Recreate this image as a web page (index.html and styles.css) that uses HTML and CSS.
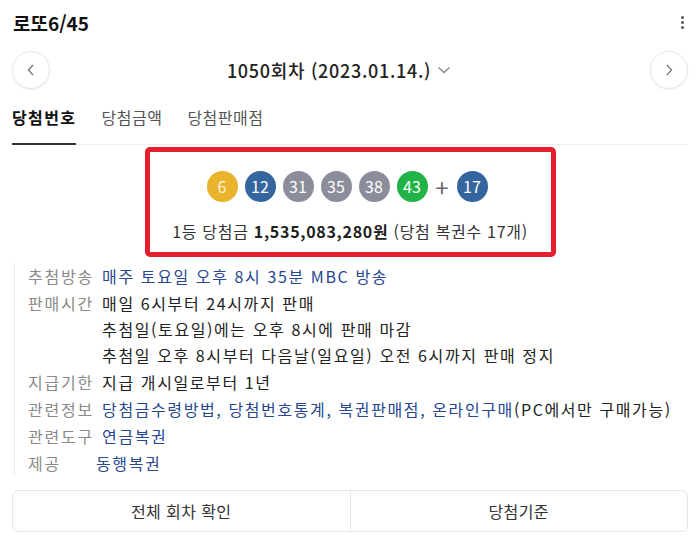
FILE: index.html
```html
<!DOCTYPE html>
<html lang="ko">
<head>
  <meta charset="UTF-8" />
  <meta name="viewport" content="width=device-width, initial-scale=1" />
  <title>로또6/45</title>
  <link rel="stylesheet" href="styles.css">
</head>
<body>
  <div class="top">
    <div class="top-title">로또6/45</div>
    <div class="kebab"><span></span><span></span><span></span></div>
  </div>

  <div class="nav">
    <button class="round-btn">
      <svg width="10" height="14" viewBox="0 0 10 14"><path d="M7 2 L2.5 7 L7 12" fill="none" stroke="#777" stroke-width="1.3"/></svg>
    </button>
    <div class="round-title">1050회차 (2023.01.14.)
      <svg class="caret" width="14" height="10" viewBox="0 0 14 10"><path d="M1.5 2.5 L7 7.5 L12.5 2.5" fill="none" stroke="#888" stroke-width="1.3"/></svg>
    </div>
    <button class="round-btn">
      <svg width="10" height="14" viewBox="0 0 10 14"><path d="M3 2 L7.5 7 L3 12" fill="none" stroke="#777" stroke-width="1.3"/></svg>
    </button>
  </div>

  <div class="tabs">
    <div class="tab active">당첨번호</div>
    <div class="tab">당첨금액</div>
    <div class="tab">당첨판매점</div>
  </div>

  <div class="win-box">
    <div class="balls">
      <span class="ball yellow">6</span>
      <span class="ball blue">12</span>
      <span class="ball gray">31</span>
      <span class="ball gray">35</span>
      <span class="ball gray">38</span>
      <span class="ball green">43</span>
      <span class="plus">+</span>
      <span class="ball blue">17</span>
    </div>
    <div class="prize">1등 당첨금 <strong>1,535,083,280원</strong> (당첨 복권수 17개)</div>
  </div>

  <div class="info">
    <div class="row">
      <span class="label">추첨방송</span>
      <div class="value link">매주 토요일 오후 8시 35분 MBC 방송</div>
    </div>
    <div class="row">
      <span class="label">판매시간</span>
      <div class="value">
        매일 6시부터 24시까지 판매<br>
        추첨일(토요일)에는 오후 8시에 판매 마감<br>
        추첨일 오후 8시부터 다음날(일요일) 오전 6시까지 판매 정지
      </div>
    </div>
    <div class="row">
      <span class="label">지급기한</span>
      <div class="value">지급 개시일로부터 1년</div>
    </div>
    <div class="row">
      <span class="label">관련정보</span>
      <div class="value"><span class="link">당첨금수령방법, 당첨번호통계, 복권판매점, 온라인구매</span>(PC에서만 구매가능)</div>
    </div>
    <div class="row">
      <span class="label">관련도구</span>
      <div class="value link">연금복권</div>
    </div>
    <div class="row">
      <span class="label">제공</span>
      <div class="value link">동행복권</div>
    </div>
  </div>

  <div class="actions">
    <button class="action-btn">전체 회차 확인</button>
    <button class="action-btn">당첨기준</button>
  </div>
</body>
</html>
```

FILE: styles.css
```css
body {
  margin: 0;
  padding: 0 12px;
  font-family: "Noto Sans CJK KR", "Noto Sans", sans-serif;
  color: #222;
  background: #fff;
}
.top {
  height: 44px;
  display: flex;
  align-items: center;
  justify-content: space-between;
}
.top-title {
  font-size: 19px;
  font-weight: bold;
  padding-left: 1px;
  color: #111;
}
.kebab {
  display: flex;
  flex-direction: column;
  gap: 2px;
  padding-right: 4px;
}
.kebab span {
  width: 3px;
  height: 3px;
  border-radius: 50%;
  background: #555;
}
.nav {
  height: 52px;
  display: flex;
  align-items: center;
  justify-content: space-between;
}
.round-btn {
  width: 38px;
  height: 38px;
  border-radius: 50%;
  border: 1px solid #e6e6e6;
  background: #fff;
  box-shadow: 0 1px 2px rgba(0,0,0,0.06);
  display: flex;
  align-items: center;
  justify-content: center;
  padding: 0;
}
.round-title {
  font-size: 18px;
  font-weight: 500;
  letter-spacing: 0.7px;
  color: #222;
  display: flex;
  align-items: center;
  gap: 6px;
  padding-right: 22px;
}
.tabs {
  display: flex;
  gap: 25px;
  border-bottom: 1px solid #eee;
}
.tab {
  font-size: 16px;
  letter-spacing: 0.5px;
  color: #555;
  line-height: 22px;
  padding: 10px 0 15px;
}
.tab.active {
  font-weight: bold;
  letter-spacing: 1.4px;
  color: #111;
  border-bottom: 2px solid #333;
  margin-bottom: -1px;
}
.win-box {
  width: 401px;
  margin: 2px auto 0;
  border: 5px solid #e5202e;
  border-radius: 5px;
  padding: 18px 0 10px;
  text-align: center;
}
.balls {
  display: flex;
  justify-content: center;
  align-items: center;
  gap: 7px;
  height: 32px;
  padding-right: 6px;
}
.ball {
  width: 31px;
  height: 31px;
  border-radius: 50%;
  color: #fff;
  font-size: 16px;
  line-height: 31px;
  text-align: center;
}
.yellow { background: #e9b32c; color: #fbf2dc; }
.blue { background: #34659e; }
.gray { background: #8c8d9b; }
.green { background: #21b347; }
.plus {
  font-size: 24px;
  color: #666;
  line-height: 31px;
  width: 15px;
}
.prize {
  margin-top: 18px;
  font-size: 16px;
  letter-spacing: 0.7px;
  line-height: 22px;
  color: #333;
}
.prize strong {
  color: #222;
}
.info {
  margin: 6px 0 0 2px;
  border-left: 1px solid #eee;
  padding-left: 13px;
  font-size: 16px;
  line-height: 26px;
}
.row {
  display: flex;
  margin-bottom: 1px;
}
.label {
  min-width: 60px;
  margin-right: 8px;
  color: #8a8a8a;
  letter-spacing: 1.8px;
  white-space: nowrap;
}
.value {
  color: #222;
  letter-spacing: 1.6px;
}
.link {
  color: #27478f;
}
.actions {
  display: flex;
  margin-top: 14px;
  border: 1px solid #e6e6e6;
  border-radius: 6px;
}
.action-btn {
  flex: 1;
  height: 40px;
  background: #fff;
  border: none;
  font-family: "Noto Sans CJK KR", sans-serif;
  font-size: 16px;
  letter-spacing: 0.4px;
  color: #333;
  border-radius: 6px;
}
.action-btn + .action-btn {
  border-left: 1px solid #e6e6e6;
  border-radius: 0 6px 6px 0;
}
```
